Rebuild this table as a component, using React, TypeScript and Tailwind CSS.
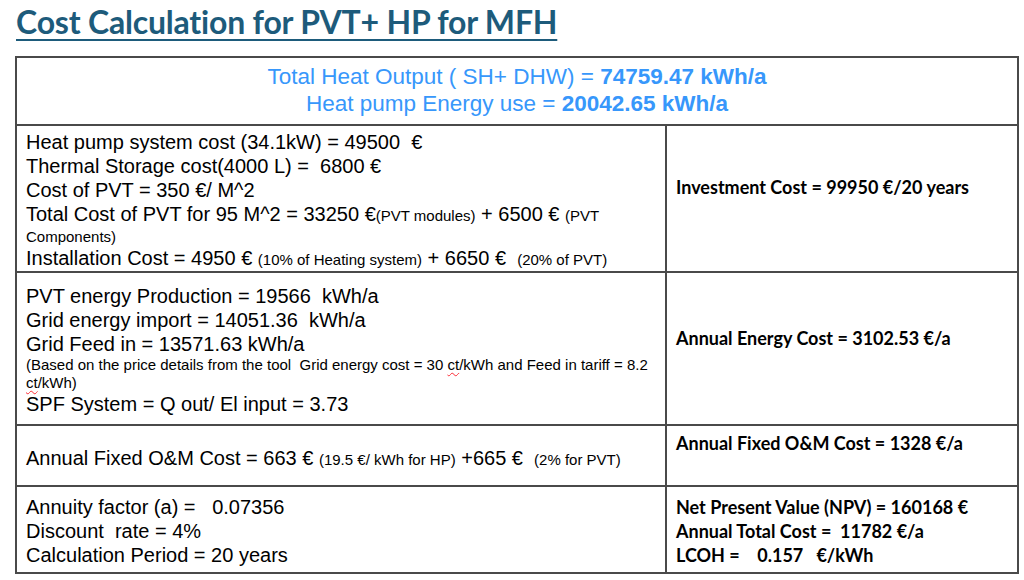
import React from 'react';

const arial = "font-['Liberation_Sans',Arial,sans-serif] text-[20px] leading-[24px] whitespace-nowrap";
const calibri = "font-['Lato','Open_Sans',sans-serif] font-bold text-[18px] leading-[24px]";
const line = 'border-[#4a4a4a]';

function Small({ children }: { children: React.ReactNode }) {
  return <span className="text-[15px] leading-none">{children}</span>;
}

function Ct() {
  return (
    <span className="underline decoration-wavy decoration-red-500 decoration-1 underline-offset-2">ct</span>
  );
}

export default function App() {
  return (
    <div className="w-[1024px] h-[580px] bg-white overflow-hidden text-black">
      <div className="pl-[16px] pt-[3px] h-[56px]">
        <h1 className="font-['Lato','Open_Sans',sans-serif] font-bold text-[32px] leading-[38px] text-[#1d5b7b] underline decoration-2 underline-offset-[5px] tracking-[-0.2px]">
          Cost Calculation for PVT+ HP for MFH
        </h1>
      </div>

      <div className={`ml-[15px] w-[1004px] border-2 ${line}`}>
        {/* summary */}
        <div
          className={`h-[68px] border-b-2 ${line} pt-[5px] text-center font-['Liberation_Sans',Arial,sans-serif] text-[22.5px] leading-[27px] text-[#3797fb]`}
        >
          <div>
            Total Heat Output ( SH+ DHW) = <b>74759.47 kWh/a</b>
          </div>
          <div>
            Heat pump Energy use = <b>20042.65 kWh/a</b>
          </div>
        </div>

        {/* investment */}
        <div className={`flex h-[147px] border-b-2 ${line}`}>
          <div className={`w-[650px] shrink-0 border-r-2 ${line} pl-[9px] pt-[4px] overflow-hidden ${arial}`}>
            <div className="h-[24px]">Heat pump system cost (34.1kW) = 49500&nbsp; €</div>
            <div className="h-[24px]">Thermal Storage cost(4000 L) = &nbsp;6800 €</div>
            <div className="h-[24px]">Cost of PVT = 350 €/ M^2</div>
            <div className="h-[24px]">
              Total Cost of PVT for 95 M^2 = 33250 €<Small>(PVT modules)</Small> + 6500 € <Small>(PVT</Small>
            </div>
            <div className="h-[20px] leading-[18px]">
              <Small>Components)</Small>
            </div>
            <div className="h-[24px]">
              Installation Cost = 4950 € <Small>(10% of Heating system)</Small> + 6650 € &nbsp;
              <Small>(20% of PVT)</Small>
            </div>
          </div>
          <div className={`flex-1 pl-[9px] pt-[49px] ${calibri}`}>Investment Cost = 99950 €/20 years</div>
        </div>

        {/* energy */}
        <div className={`flex h-[153px] border-b-2 ${line}`}>
          <div className={`w-[650px] shrink-0 border-r-2 ${line} pl-[9px] pt-[11px] overflow-hidden ${arial}`}>
            <div>PVT energy Production = 19566 &nbsp;kWh/a</div>
            <div>Grid energy import = 14051.36 &nbsp;kWh/a</div>
            <div>Grid Feed in = 13571.63 kWh/a</div>
            <div className="text-[15px] leading-[18px]">
              (Based on the price details from the tool &nbsp;Grid energy cost = 30 <Ct />/kWh and Feed in tariff = 8.2
            </div>
            <div className="text-[15px] leading-[18px]">
              <Ct />/kWh)
            </div>
            <div>SPF System = Q out/ El input = 3.73</div>
          </div>
          <div className={`flex-1 pl-[9px] pt-[53px] ${calibri}`}>Annual Energy Cost = 3102.53 €/a</div>
        </div>

        {/* O&M */}
        <div className={`flex h-[61px] border-b-2 ${line}`}>
          <div className={`w-[650px] shrink-0 border-r-2 ${line} pl-[9px] pt-[20px] overflow-hidden ${arial}`}>
            Annual Fixed O&amp;M Cost = 663 € <Small>(19.5 €/ kWh for HP)</Small> +665 € &nbsp;
            <Small>(2% for PVT)</Small>
          </div>
          <div className={`flex-1 pl-[9px] pt-[5px] ${calibri}`}>Annual Fixed O&amp;M Cost = 1328 €/a</div>
        </div>

        {/* totals */}
        <div className="flex h-[85px]">
          <div className={`w-[650px] shrink-0 border-r-2 ${line} pl-[9px] pt-[8px] overflow-hidden ${arial}`}>
            <div>Annuity factor (a) = &nbsp; 0.07356</div>
            <div>Discount &nbsp;rate = 4%</div>
            <div>Calculation Period = 20 years</div>
          </div>
          <div className={`flex-1 pl-[9px] pt-[8px] ${calibri}`}>
            <div>Net Present Value (NPV) = 160168 €</div>
            <div>Annual Total Cost = &nbsp;11782 €/a</div>
            <div>LCOH = &nbsp; &nbsp;0.157 &nbsp; €/kWh</div>
          </div>
        </div>
      </div>
    </div>
  );
}
